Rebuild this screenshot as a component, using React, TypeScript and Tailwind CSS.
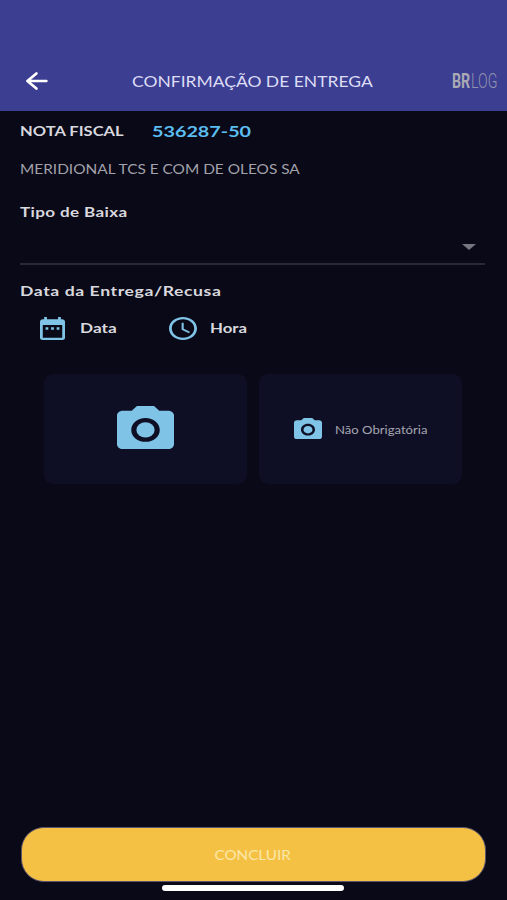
type IconProps = {
  className?: string;
};

function IconBack({ className }: IconProps) {
  return (
    <svg viewBox="0 0 22 18" preserveAspectRatio="none" className={className} fill="none" aria-hidden>
      <path
        d="M10.4 1.4L1.4 9l9 7.6M1.6 9h18.8"
        stroke="currentColor"
        strokeWidth="2.6"
        strokeLinecap="round"
        strokeLinejoin="round"
      />
    </svg>
  );
}

function IconCalendar({ className }: IconProps) {
  return (
    <svg viewBox="3 2 18 20" preserveAspectRatio="none" className={className} fill="currentColor" aria-hidden>
      <path d="M9 11H7v2h2v-2zm4 0h-2v2h2v-2zm4 0h-2v2h2v-2zm2-7h-1V2h-2v2H8V2H6v2H5c-1.11 0-1.99.9-1.99 2L3 20c0 1.1.89 2 2 2h14c1.1 0 2-.9 2-2V6c0-1.1-.9-2-2-2zm0 16H5V9h14v11z" />
    </svg>
  );
}

function IconClock({ className }: IconProps) {
  return (
    <svg viewBox="2 2 20 20" preserveAspectRatio="none" className={className} fill="currentColor" aria-hidden>
      <path d="M11.99 2C6.47 2 2 6.48 2 12s4.47 10 9.99 10C17.52 22 22 17.52 22 12S17.52 2 11.99 2zM12 20c-4.42 0-8-3.58-8-8s3.58-8 8-8 8 3.58 8 8-3.58 8-8 8zm.5-13H11v6l5.25 3.15.75-1.23-4.5-2.67z" />
    </svg>
  );
}

function IconCamera({ className }: IconProps) {
  return (
    <svg viewBox="2 2 20 18" preserveAspectRatio="none" className={className} fill="currentColor" aria-hidden>
      <circle cx="12" cy="12" r="3.2" />
      <path d="M9 2L7.17 4H4c-1.1 0-2 .9-2 2v12c0 1.1.9 2 2 2h16c1.1 0 2-.9 2-2V6c0-1.1-.9-2-2-2h-3.17L15 2H9zm3 15c-2.76 0-5-2.24-5-5s2.24-5 5-5 5 2.24 5 5-2.24 5-5 5z" />
    </svg>
  );
}

function Header() {
  return (
    <header className="flex h-[111px] items-end bg-[#3c3e92] pb-[21px] pl-[26px]">
      <button type="button" aria-label="Voltar" className="h-[18px] w-[22px] text-white">
        <IconBack className="h-full w-full" />
      </button>
      <h1 className="ml-[84px] h-[18px] w-[320px] text-[15px] leading-[18px] whitespace-nowrap text-[#dcdcf4]">
        <span className="inline-block origin-left scale-x-[1.165]">CONFIRMAÇÃO DE ENTREGA</span>
      </h1>
      <div className="flex h-[18px] w-[45px] font-[Roboto] text-[20px] leading-[18px] text-[#a9a9b4]">
        <span className="w-[19px]">
          <span className="inline-block origin-left scale-x-[0.71] font-bold">BR</span>
        </span>
        <span className="w-[26px]">
          <span className="inline-block origin-left scale-x-[0.71] font-light text-[#9293ad]">LOG</span>
        </span>
      </div>
    </header>
  );
}

export default function App() {
  return (
    <div className="flex h-[900px] w-[507px] flex-col overflow-hidden bg-[#090917] font-[Lato,sans-serif] text-[#d8d8de]">
      <Header />

      <main className="flex flex-1 flex-col pl-5">
        {/* Nota fiscal */}
        <div className="mt-[10px] flex h-5 leading-5 font-bold whitespace-nowrap">
          <span className="w-[132px] text-[14px]">
            <span className="inline-block origin-left scale-x-[1.18]">NOTA FISCAL</span>
          </span>
          <span className="text-[16px] text-[#5cbdf0]">
            <span className="inline-block origin-left scale-x-[1.235]">536287-50</span>
          </span>
        </div>
        <p className="mt-[18px] h-5 text-[13.5px] leading-5 whitespace-nowrap text-[#a2a2ab]">
          <span className="inline-block origin-left scale-x-[1.14]">MERIDIONAL TCS E COM DE OLEOS SA</span>
        </p>

        {/* Tipo de baixa */}
        <label className="mt-[23px] h-5 text-[14px] leading-5 font-bold">
          <span className="inline-block origin-left scale-x-[1.22] tracking-[0.3px]">Tipo de Baixa</span>
        </label>
        <div className="flex h-[43px] w-[465px] items-start justify-end border-b-2 border-[#292935] pt-[22px] pr-[9px]">
          <svg viewBox="0 0 14 6" className="h-[6px] w-[14px] fill-[#777780]" aria-hidden>
            <path d="M0 0h14L7 6z" />
          </svg>
        </div>

        {/* Data e hora */}
        <h2 className="mt-4 h-5 text-[14px] leading-5 font-bold whitespace-nowrap">
          <span className="inline-block origin-left scale-x-[1.26] tracking-[0.45px]">Data da Entrega/Recusa</span>
        </h2>
        <div className="mt-[15px] flex h-6 items-center pl-5 text-[14px] leading-5 font-bold text-[#d8d8de]">
          <IconCalendar className="h-[23px] w-[25px] text-[#7fc3e6]" />
          <span className="ml-[15px] w-[89px]">
            <span className="inline-block origin-left scale-x-[1.23]">Data</span>
          </span>
          <IconClock className="h-[23px] w-[28px] text-[#7fc3e6]" />
          <span className="ml-[13px]">
            <span className="inline-block origin-left scale-x-[1.2]">Hora</span>
          </span>
        </div>

        {/* Fotos */}
        <div className="mt-[34px] flex gap-3 pl-6 text-[#7fc3e6]">
          <button type="button" className="flex h-[110px] w-[203px] items-center justify-center rounded-[9px] bg-[#0e0f25]">
            <IconCamera className="mb-1 h-[43px] w-[57px]" />
          </button>
          <button type="button" className="flex h-[110px] w-[203px] items-center rounded-[9px] bg-[#0e0f25] pl-[35px]">
            <IconCamera className="mb-0.5 h-[21px] w-[28px]" />
            <span className="mt-0.5 ml-[13px] text-[11px] leading-4 whitespace-nowrap text-[#a6a6b1]">
              <span className="inline-block origin-left scale-x-[1.19]">Não Obrigatória</span>
            </span>
          </button>
        </div>
      </main>

      <footer className="flex h-[73px] flex-col items-center pr-px">
        <button
          type="button"
          className="h-[55px] w-[465px] rounded-[23px] border border-[#5b5570] bg-[#f5c145] pt-[3px] text-[13px] text-[#fae8a8]"
        >
          <span className="inline-block scale-x-[1.17]">CONCLUIR</span>
        </button>
        <div className="mt-[3px] h-[6px] w-[182px] rounded-full bg-white" />
      </footer>
    </div>
  );
}
